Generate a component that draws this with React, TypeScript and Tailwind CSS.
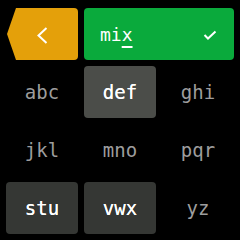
import React from 'react';

const keys = [
  { label: 'abc', state: 'idle' },
  { label: 'def', state: 'focus' },
  { label: 'ghi', state: 'idle' },
  { label: 'jkl', state: 'idle' },
  { label: 'mno', state: 'idle' },
  { label: 'pqr', state: 'idle' },
  { label: 'stu', state: 'pressed' },
  { label: 'vwx', state: 'pressed' },
  { label: 'yz', state: 'idle' },
];

const cellStyles: Record<string, string> = {
  idle: 'text-[#9d9d9d]',
  focus: 'bg-[#4b4d49] text-white [text-shadow:0_0_0.4px_white]',
  pressed: 'bg-[#353734] text-white [text-shadow:0_0_0.4px_white]',
};

export default function App() {
  return (
    <div className="w-[240px] h-[240px] bg-black overflow-hidden font-['DejaVu_Sans_Mono',monospace]">
      <div className="grid grid-cols-[72px_72px_72px] auto-rows-[52px] gap-[6px] pl-[6px] pt-[8px]">
        <button className="flex items-center justify-center bg-[#e4a00a] rounded-r-[4px] [clip-path:polygon(10px_0,100%_0,100%_100%,10px_100%,1px_50%)]">
          <svg width="11" height="17" viewBox="0 0 11 17" className="mt-[3px] shrink-0">
            <path d="M9.5 1 L1.5 8.5 L9.5 16" fill="none" stroke="white" strokeWidth="2" />
          </svg>
        </button>
        <div className="col-span-2 flex items-center justify-between bg-[#0aaa3c] rounded-[4px] pl-[16px] pr-[17px]">
          <span className="text-white text-[18px] mt-[1px]">
            mi<span className="underline decoration-2 underline-offset-[5px]">x</span>
          </span>
          <svg width="14" height="10" viewBox="0 0 14 10" className="mt-[1px] shrink-0">
            <path d="M1.5 5 L5 8.5 L12.5 1.5" fill="none" stroke="white" strokeWidth="2" />
          </svg>
        </div>
        {keys.map((k) => (
          <div
            key={k.label}
            className={`flex items-center justify-center rounded-[4px] text-[19px] ${cellStyles[k.state]}`}
          >
            {k.label}
          </div>
        ))}
      </div>
    </div>
  );
}
